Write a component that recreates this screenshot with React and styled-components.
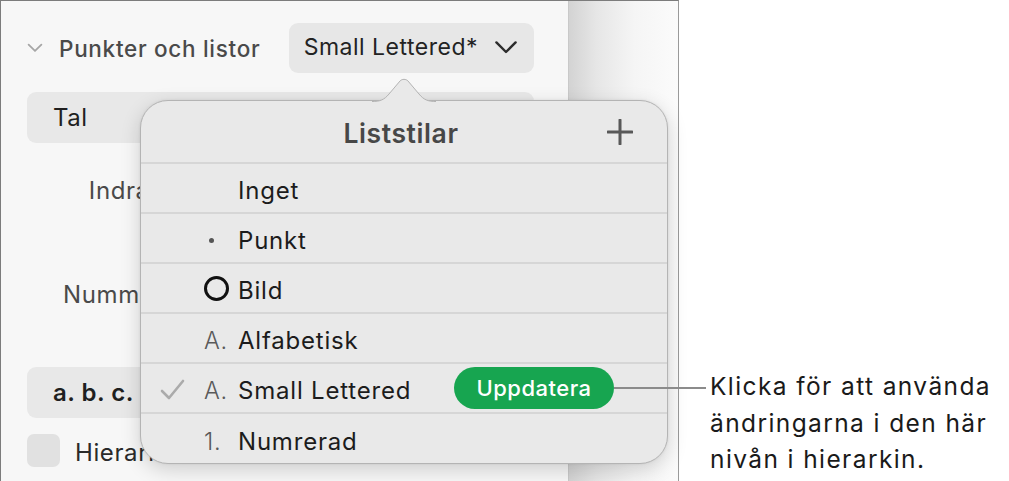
import React from "react";
import styled, { createGlobalStyle } from "styled-components";

const GlobalStyle = createGlobalStyle`
  html, body {
    margin: 0;
    padding: 0;
    background: #ffffff;
  }
  body {
    font-family: Inter, "Noto Sans", "Liberation Sans", sans-serif;
    -webkit-font-smoothing: antialiased;
  }
`;

const styles = [
  { key: "none", label: "Inget" },
  { key: "bullet", label: "Punkt", marker: "dot" },
  { key: "image", label: "Bild", marker: "ring" },
  { key: "alpha", label: "Alfabetisk", marker: "A." },
  { key: "small", label: "Small Lettered", marker: "A.", checked: true, update: true },
  { key: "num", label: "Numrerad", marker: "1." },
];

function Chevron({ size = 18, color = "#333", width = 2 }) {
  return (
    <svg width={size} height={size * 0.6} viewBox="0 0 20 12" fill="none">
      <path d="M2 2 L10 10 L18 2" stroke={color} strokeWidth={width} strokeLinecap="round" strokeLinejoin="round" />
    </svg>
  );
}

function Marker({ type }) {
  if (type === "dot") return <Dot />;
  if (type === "ring") return <Ring />;
  if (type) return <MarkerText>{type}</MarkerText>;
  return null;
}

function StyleRow({ item }) {
  return (
    <Row>
      <CheckCell>
        {item.checked && (
          <svg width="25" height="22" viewBox="0 0 25 22" fill="none">
            <path d="M2 12 L9 19 L23 2" stroke="#ababab" strokeWidth="2.6" strokeLinecap="round" strokeLinejoin="round" />
          </svg>
        )}
      </CheckCell>
      <MarkerCell>
        <Marker type={item.marker} />
      </MarkerCell>
      <RowLabel>{item.label}</RowLabel>
      {item.update && <UpdateButton>Uppdatera</UpdateButton>}
    </Row>
  );
}

export default function App() {
  return (
    <Page>
      <GlobalStyle />
      <Frame>
        <Sidebar>
          <SectionHeader>
            <SectionTitle>
              <Chevron size={16} color="#a6a6a6" width={2.2} />
              <span>Punkter och listor</span>
            </SectionTitle>
            <PopupButton>
              Small Lettered*
              <Chevron size={24} color="#2c2c2c" width={2} />
            </PopupButton>
          </SectionHeader>
          <SelectBox>Tal</SelectBox>
          <FieldRow $top={22} $height={50}>
            <FieldLabel $width={138}>Indrag</FieldLabel>
          </FieldRow>
          <FieldRow $top={54} $height={50}>
            <FieldLabel $width={137}>Nummer</FieldLabel>
          </FieldRow>
          <SelectBox $bold $top={48}>a. b. c.</SelectBox>
          <CheckRow>
            <CheckBox />
            <CheckLabel>Hierarkiska tal</CheckLabel>
          </CheckRow>
        </Sidebar>
        <Gutter />
        <Popover>
          <Arrow width="64" height="24" viewBox="0 0 64 24">
            <path
              d="M0 23.5 C8 23.5 12 22 17 16 L28 3 C30 0.8 34 0.8 36 3 L47 16 C52 22 56 23.5 64 23.5"
              fill="#e9e9e9"
              stroke="#b4b4b4"
              strokeWidth="1"
            />
          </Arrow>
          <PopoverHeader>
            <PopoverTitle>Liststilar</PopoverTitle>
            <AddButton>
              <svg width="26" height="26" viewBox="0 0 26 26">
                <path d="M13 1 V25 M1 13 H25" stroke="#585858" strokeWidth="3" strokeLinecap="round" />
              </svg>
            </AddButton>
          </PopoverHeader>
          {styles.map((item) => (
            <StyleRow key={item.key} item={item} />
          ))}
        </Popover>
      </Frame>
      <Leader />
      <Annotation>
        Klicka för att använda
        <br />
        ändringarna i den här
        <br />
        nivån i hierarkin.
      </Annotation>
    </Page>
  );
}

const Page = styled.div`
  position: relative;
  display: flex;
  width: 1009px;
  height: 481px;
  overflow: hidden;
`;

const Frame = styled.div`
  position: relative;
  display: flex;
  width: 679px;
  height: 481px;
  box-sizing: border-box;
  border-top: 1.5px solid #7c7c7c;
  border-left: 1.5px solid #7c7c7c;
  border-right: 1.5px solid #9a9a9a;
  flex-shrink: 0;
`;

const Sidebar = styled.div`
  width: 568px;
  flex-shrink: 0;
  box-sizing: border-box;
  padding: 22px 34px 0 26px;
  background: #f7f7f7;
  border-right: 1px solid #c9c9c9;
  display: flex;
  flex-direction: column;
`;

const Gutter = styled.div`
  flex: 1;
  background: linear-gradient(90deg, #d3d3d3 0%, #e6e6e6 25%, #f5f5f5 60%, #fbfbfb 100%);
`;

const SectionHeader = styled.div`
  display: flex;
  align-items: center;
  justify-content: space-between;
  height: 50px;
`;

const SectionTitle = styled.div`
  display: flex;
  align-items: center;
  gap: 16px;
  font-size: 22.5px;
  font-weight: 500;
  color: #4a4a4a;
  letter-spacing: 0.7px;
`;

const PopupButton = styled.div`
  display: flex;
  align-items: center;
  gap: 16px;
  height: 50px;
  padding: 0 16px 2px 15px;
  box-sizing: border-box;
  border-radius: 9px;
  background: #e7e7e7;
  font-size: 23px;
  letter-spacing: 0.5px;
  color: #232323;
`;

const SelectBox = styled.div`
  display: flex;
  align-items: center;
  height: 51px;
  margin-top: ${(p) => p.$top ?? 19}px;
  padding-left: 26px;
  border-radius: 9px;
  background: #e8e8e8;
  font-size: 24px;
  font-weight: ${(p) => (p.$bold ? 600 : 400)};
  letter-spacing: 0.5px;
  color: #1f1f1f;
`;

const FieldRow = styled.div`
  display: flex;
  align-items: center;
  height: ${(p) => p.$height}px;
  margin-top: ${(p) => p.$top}px;
`;

const FieldLabel = styled.div`
  width: ${(p) => p.$width}px;
  text-align: right;
  font-size: 24px;
  letter-spacing: 0.6px;
  color: #4a4a4a;
`;

const CheckRow = styled.div`
  display: flex;
  align-items: center;
  gap: 15px;
  margin-top: 16px;
  font-size: 24px;
  letter-spacing: 0.6px;
  color: #2a2a2a;
`;

const CheckLabel = styled.span`
  margin-top: 4px;
`;

const CheckBox = styled.div`
  width: 33px;
  height: 33px;
  border-radius: 7px;
  background: #e1e1e1;
`;

const Popover = styled.div`
  position: absolute;
  left: 139px;
  top: 99px;
  width: 528px;
  height: 364px;
  box-sizing: border-box;
  background: #e9e9e9;
  border: 1px solid #b4b4b4;
  border-radius: 28px;
  box-shadow: 0 6px 20px rgba(0, 0, 0, 0.16), 0 0 3px rgba(0, 0, 0, 0.08);
  display: flex;
  flex-direction: column;
`;

const Arrow = styled.svg`
  position: absolute;
  left: 231px;
  top: -23px;
`;

const PopoverHeader = styled.div`
  position: relative;
  display: flex;
  align-items: center;
  justify-content: center;
  height: 61px;
  flex-shrink: 0;
  border-bottom: 2px solid #d6d6d6;
`;

const PopoverTitle = styled.div`
  font-size: 26.5px;
  font-weight: 600;
  letter-spacing: 0.6px;
  color: #474747;
  margin-right: 6px;
  margin-top: 2px;
`;

const AddButton = styled.div`
  position: absolute;
  right: 34px;
  top: 18px;
  display: flex;
`;

const Row = styled.div`
  display: flex;
  align-items: center;
  height: 50px;
  flex-shrink: 0;
  box-sizing: border-box;
  padding-top: 4px;
  border-bottom: 2px solid #d6d6d6;
  &:last-child {
    border-bottom: none;
  }
`;

const CheckCell = styled.div`
  width: 63px;
  padding-left: 19px;
  box-sizing: border-box;
  display: flex;
  align-items: center;
`;

const MarkerCell = styled.div`
  width: 34px;
  display: flex;
  align-items: center;
`;

const MarkerText = styled.span`
  font-size: 23.5px;
  font-weight: 300;
  letter-spacing: 0.8px;
  color: #5a5a5a;
`;

const Dot = styled.span`
  width: 5px;
  height: 5px;
  margin-left: 5px;
  border-radius: 50%;
  background: #555;
`;

const Ring = styled.span`
  width: 19px;
  height: 19px;
  margin-top: -3px;
  border-radius: 50%;
  border: 3.5px solid #111;
`;

const RowLabel = styled.span`
  font-size: 24px;
  color: #1c1c1c;
  letter-spacing: 0.8px;
`;

const UpdateButton = styled.div`
  margin-left: auto;
  margin-right: 53px;
  margin-top: -4px;
  display: flex;
  align-items: center;
  justify-content: center;
  width: 160px;
  height: 42px;
  border-radius: 21px;
  background: #17a550;
  color: #ffffff;
  font-size: 22px;
  font-weight: 500;
  letter-spacing: 0.5px;
`;

const Leader = styled.div`
  position: absolute;
  left: 614px;
  top: 387px;
  width: 92px;
  height: 2px;
  background: #8b8b8b;
`;

const Annotation = styled.div`
  padding-top: 368px;
  margin-left: 31px;
  font-size: 24.5px;
  line-height: 36.5px;
  letter-spacing: 1.4px;
  color: #1a1a1a;
  white-space: nowrap;
`;
